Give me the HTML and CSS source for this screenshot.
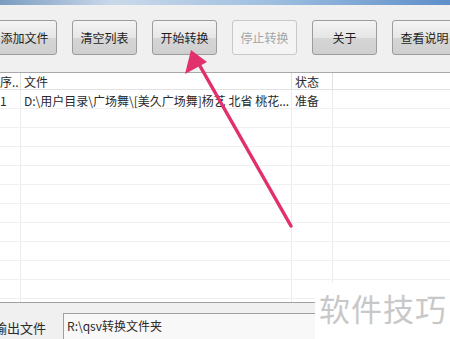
FILE: index.html
```html
<!DOCTYPE html>
<html lang="zh-CN">
<head>
    <meta charset="UTF-8">
    <title>QSV转换</title>
    <link rel="stylesheet" href="styles.css">
</head>
<body>
    <div class="titlebar"></div>
    <div class="toolbar">
        <div class="btn">添加文件</div>
        <div class="btn">清空列表</div>
        <div class="btn">开始转换</div>
        <div class="btn disabled">停止转换</div>
        <div class="btn">关于</div>
        <div class="btn">查看说明</div>
    </div>
    <div class="list">
        <div class="row head">
            <div class="cell c1">序..</div>
            <div class="cell c2">文件</div>
            <div class="cell c3">状态</div>
            <div class="cell c4"></div>
        </div>
        <div class="row">
            <div class="cell c1">1</div>
            <div class="cell c2">D:\用户目录\广场舞\[美久广场舞]杨艺 北省 桃花...</div>
            <div class="cell c3">准备</div>
            <div class="cell c4"></div>
        </div>
        <div class="row"><div class="cell c1"></div><div class="cell c2"></div><div class="cell c3"></div><div class="cell c4"></div></div>
        <div class="row"><div class="cell c1"></div><div class="cell c2"></div><div class="cell c3"></div><div class="cell c4"></div></div>
        <div class="row"><div class="cell c1"></div><div class="cell c2"></div><div class="cell c3"></div><div class="cell c4"></div></div>
        <div class="row"><div class="cell c1"></div><div class="cell c2"></div><div class="cell c3"></div><div class="cell c4"></div></div>
        <div class="row"><div class="cell c1"></div><div class="cell c2"></div><div class="cell c3"></div><div class="cell c4"></div></div>
        <div class="row"><div class="cell c1"></div><div class="cell c2"></div><div class="cell c3"></div><div class="cell c4"></div></div>
        <div class="row"><div class="cell c1"></div><div class="cell c2"></div><div class="cell c3"></div><div class="cell c4"></div></div>
        <div class="row"><div class="cell c1"></div><div class="cell c2"></div><div class="cell c3"></div><div class="cell c4"></div></div>
        <div class="row"><div class="cell c1"></div><div class="cell c2"></div><div class="cell c3"></div><div class="cell c4"></div></div>
        <div class="row"><div class="cell c1"></div><div class="cell c2"></div><div class="cell c3"></div><div class="cell c4"></div></div>
        <div class="row"><div class="cell c1"></div><div class="cell c2"></div><div class="cell c3"></div><div class="cell c4"></div></div>
    </div>
    <div class="output">
        <span class="label">输出文件</span>
        <div class="path">R:\qsv转换文件夹</div>
    </div>

    <div class="watermark">软件技巧</div>

    <!-- 红色箭头标注 -->
    <svg class="arrow" width="450" height="339" viewBox="0 0 450 339">
        <line x1="291" y1="226" x2="200" y2="66" stroke="#e2306c" stroke-width="3.5" stroke-linecap="round"/>
        <polygon points="191,50 185,74 207,62" fill="#e2306c"/>
    </svg>
</body>
</html>
```

FILE: styles.css
```css
* {
    box-sizing: border-box;
    margin: 0;
    padding: 0;
}

body {
    width: 450px;
    height: 339px;
    overflow: hidden;
    background-color: #f0f0f0;
    font-family: "Noto Sans CJK SC", "DejaVu Sans", sans-serif;
    font-size: 12px;
    color: #2a2a2a;
    position: relative;
}

.titlebar {
    height: 5px;
    background: linear-gradient(to right, #7a9cc0, #c9d9ea 25%, #9fbfe0 60%, #5e8fc9);
}

.toolbar {
    height: 68px;
    display: flex;
    gap: 15px;
    padding-top: 15px;
    margin-left: -8px;
    border-bottom: 1px solid #a9a9a9;
}

.btn {
    flex: none;
    width: 65px;
    height: 35px;
    border: 1px solid #9c9c9c;
    border-radius: 3px;
    background: linear-gradient(to bottom, #f4f4f4, #e6e6e6 50%, #d6d6d6 51%, #cfcfcf);
    display: flex;
    justify-content: center;
    align-items: center;
    font-size: 12px;
    color: #1e1e1e;
}

.btn.disabled {
    background: #f4f4f4;
    border-color: #c8c8c8;
    color: #a5a5a5;
}

.list {
    height: 230px;
    background-color: #fff;
    border-bottom: 1px solid #a0a0a0;
    overflow: hidden;
}

.row {
    display: flex;
    height: 19px;
    border-bottom: 1px solid #f0f0f0;
}

.row .cell {
    line-height: 21px;
}

.row.head {
    height: 17px;
    border-bottom: 1px solid #e2e2e2;
}

.row.head .cell {
    line-height: 18px;
    border-right-color: #e0e0e0;
}

.cell {
    flex: none;
    border-right: 1px solid #ececec;
    padding-left: 3px;
    white-space: nowrap;
    overflow: hidden;
}

.c1 {
    width: 21px;
    padding-left: 0;
}

.c2 {
    width: 271px;
}

.c3 {
    width: 41px;
}

.c4 {
    flex: 1;
    border-right: none;
}

.output {
    height: 36px;
    display: flex;
    align-items: flex-end;
    gap: 17px;
}

.label {
    margin-left: -6px;
    font-size: 13px;
    line-height: 22px;
}

.path {
    width: 260px;
    height: 26px;
    background-color: #f8f8f8;
    border-top: 1px solid #a0a0a0;
    border-left: 1px solid #a0a0a0;
    padding: 3px 0 0 3px;
    font-size: 12px;
}

.watermark {
    position: absolute;
    left: 315px;
    top: 283px;
    width: 135px;
    height: 56px;
    background-color: #fff;
    color: #c8c8c8;
    font-size: 31px;
    padding: 2px 0 0 4px;
    letter-spacing: 1px;
}

.arrow {
    position: absolute;
    left: 0;
    top: 0;
}
```
